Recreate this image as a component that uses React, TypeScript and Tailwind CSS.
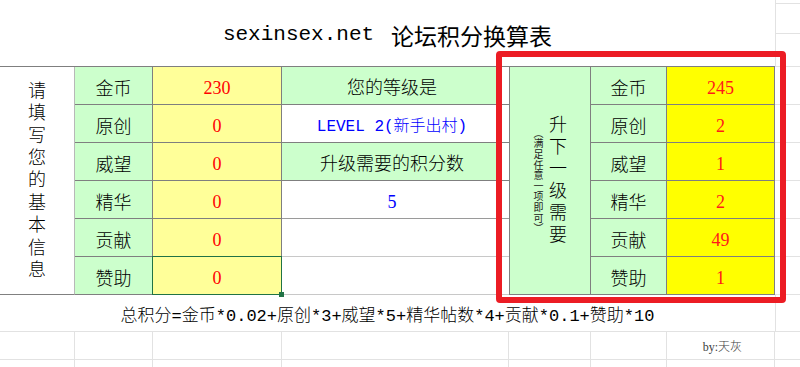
import React from "react";

const serif = "font-['Liberation_Serif','Noto_Sans_CJK_SC',serif]";
const mono = "font-['Liberation_Mono','Noto_Sans_CJK_SC',monospace]";

type DCell = { text: string; cls: string; textCls: string; line: string };

const leftRows: { label: string; val: string; d: DCell }[] = [
  { label: "金币", val: "230", d: { text: "您的等级是", cls: "bg-[#ccffcc]", textCls: "text-[18px] text-black " + serif, line: "border-[#7f7f7f]" } },
  { label: "原创", val: "0", d: { text: "LEVEL 2(新手出村)", cls: "bg-white", textCls: "text-[16px] text-[#0000ff] " + mono, line: "border-[#7f7f7f]" } },
  { label: "威望", val: "0", d: { text: "升级需要的积分数", cls: "bg-[#ccffcc]", textCls: "text-[18px] text-black " + serif, line: "border-[#7f7f7f]" } },
  { label: "精华", val: "0", d: { text: "5", cls: "bg-white", textCls: "text-[18px] text-[#0000ff] " + serif, line: "border-[#9a9a9a]" } },
  { label: "贡献", val: "0", d: { text: "", cls: "bg-white", textCls: "", line: "border-[#c8c8c8]" } },
  { label: "赞助", val: "0", d: { text: "", cls: "bg-white", textCls: "", line: "border-[#c8c8c8]" } },
];

const rightRows: [string, string][] = [
  ["金币", "245"],
  ["原创", "2"],
  ["威望", "1"],
  ["精华", "2"],
  ["贡献", "49"],
  ["赞助", "1"],
];

export default function App() {
  return (
    <div className={"relative w-[800px] h-[367px] overflow-hidden bg-white text-black font-light " + serif}>
      {/* title row */}
      <div className="flex h-[67px]">
        <div className="w-[775px] border-b border-[#7f7f7f] flex items-center justify-center pt-[4px]">
          <span className={"text-[21px] font-normal whitespace-pre " + mono}>sexinsex.net</span>
          <span className="ml-[17px] text-[23px] font-normal font-['Noto_Sans_CJK_SC',sans-serif]">论坛积分换算表</span>
        </div>
        <div className="w-[25px] border-l border-[#e2e2e2] flex flex-col">
          <div className="h-[4px] border-b border-[#e2e2e2]" />
          <div className="h-[30px] border-b border-[#e2e2e2]" />
          <div className="flex-1 border-b border-[#e2e2e2]" />
        </div>
      </div>

      {/* main table */}
      <div className="flex h-[228px]">
        {/* column A */}
        <div className="w-[75px] border-r border-r-[#b8b8b8] border-b border-b-[#808080] flex items-center justify-center pt-[3px]">
          <div className="[writing-mode:vertical-rl] [text-orientation:upright] text-[18px] tracking-[4.4px] leading-none font-['Noto_Sans_CJK_SC',sans-serif]">
            请填写您的基本信息
          </div>
        </div>

        {/* columns B, C, D */}
        <div className="w-[427px] flex flex-col">
          {leftRows.map((r, i) => (
            <div key={i} className="flex h-[38px]">
              <div className="w-[78px] bg-[#ccffcc] border-r border-b border-[#7f7f7f] flex items-center justify-center pt-[7px] text-[18px]">
                {r.label}
              </div>
              <div className="relative w-[129px] bg-[#ffff99] border-r border-b border-[#7f7f7f] flex items-center justify-center pt-[6px] text-[18px] font-normal text-[#ff0000]">
                {r.val}
                {i === 5 && (
                  <div className="absolute -inset-px border border-[#217346]">
                    <div className="absolute right-[-3px] bottom-[-3px] w-[5px] h-[5px] bg-[#217346]" />
                  </div>
                )}
              </div>
              <div className={"w-[220px] border-b flex items-center justify-center pt-[6px] " + r.d.cls + " " + r.d.line}>
                <span className={r.d.textCls}>{r.d.text}</span>
              </div>
            </div>
          ))}
        </div>

        {/* white strip */}
        <div className="w-[7px] flex flex-col">
          {leftRows.map((r, i) => (
            <div key={i} className={"h-[38px] bg-white border-b " + r.d.line} />
          ))}
        </div>

        {/* column E */}
        <div className="w-[82px] bg-[#ccffcc] border-l border-r border-b border-[#7f7f7f] flex items-center justify-center gap-[6px] font-['Noto_Sans_CJK_SC',sans-serif]">
          <div className="[writing-mode:vertical-rl] [text-orientation:upright] text-[10px] tracking-[0.6px] leading-none font-normal text-[#222] pt-[1px]">
            （满足任意一项即可）
          </div>
          <div className="[writing-mode:vertical-rl] [text-orientation:upright] text-[18px] tracking-[4px] leading-none">
            升下一级需要
          </div>
        </div>

        {/* columns F, G */}
        <div className="w-[184px] flex flex-col">
          {rightRows.map(([label, val], i) => (
            <div key={i} className="flex h-[38px]">
              <div className="w-[76px] bg-[#ccffcc] border-r border-b border-[#7f7f7f] flex items-center justify-center pt-[7px] text-[18px]">
                {label}
              </div>
              <div className="w-[108px] bg-[#ffff00] border-r border-b border-[#7f7f7f] flex items-center justify-center pt-[6px] text-[18px] text-[#ff1a1a]">
                {val}
              </div>
            </div>
          ))}
        </div>

        {/* column H */}
        <div className="w-[25px] flex flex-col">
          {rightRows.map((_, i) => (
            <div key={i} className="h-[38px] border-b border-[#e2e2e2]" />
          ))}
        </div>
      </div>

      {/* formula row */}
      <div className="flex h-[37px]">
        <div className="w-[775px] border-b border-[#e2e2e2] flex items-center justify-center pt-[8px]">
          <span className={"text-[17px] whitespace-pre " + mono}>总积分=金币*0.02+原创*3+威望*5+精华帖数*4+贡献*0.1+赞助*10</span>
        </div>
        <div className="w-[25px] border-l border-b border-[#e2e2e2]" />
      </div>

      {/* empty sheet rows */}
      <div className="flex h-[28px]">
        <div className="w-[75px] border-r border-b border-[#e2e2e2]" />
        <div className="w-[78px] border-r border-b border-[#e2e2e2]" />
        <div className="w-[129px] border-r border-b border-[#e2e2e2]" />
        <div className="w-[227px] border-r border-b border-[#e2e2e2]" />
        <div className="w-[82px] border-r border-b border-[#e2e2e2]" />
        <div className="w-[76px] border-r border-b border-[#e2e2e2]" />
        <div className="w-[108px] border-r border-b border-[#e2e2e2] flex items-center justify-end pr-[32px] pt-[3px] text-[12px] text-[#404040]">
          by:天灰
        </div>
        <div className="w-[25px] border-b border-[#e2e2e2]" />
      </div>
      <div className="flex h-[7px]">
        <div className="w-[75px] border-r border-[#e2e2e2]" />
        <div className="w-[78px] border-r border-[#e2e2e2]" />
        <div className="w-[129px] border-r border-[#e2e2e2]" />
        <div className="w-[227px] border-r border-[#e2e2e2]" />
        <div className="w-[82px] border-r border-[#e2e2e2]" />
        <div className="w-[76px] border-r border-[#e2e2e2]" />
        <div className="w-[108px] border-r border-[#e2e2e2]" />
        <div className="w-[25px]" />
      </div>

      {/* red annotation box */}
      <div className="absolute left-[496px] top-[51px] w-[290px] h-[252px] border-[6px] border-[#ec1c24] rounded-[4px] pointer-events-none" />
    </div>
  );
}
